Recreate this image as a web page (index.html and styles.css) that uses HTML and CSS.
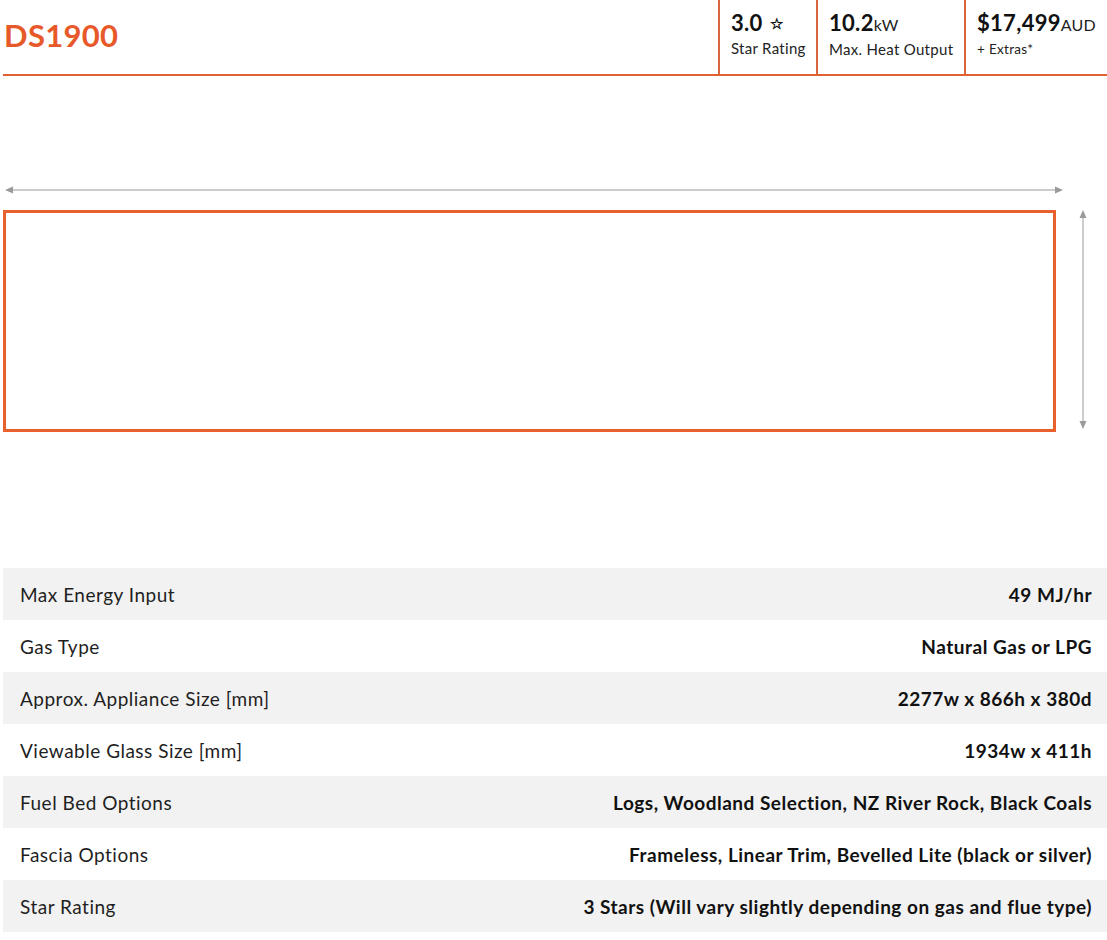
FILE: index.html
```html
<!DOCTYPE html>
<html>
<head>
<meta charset="utf-8">
<link rel="stylesheet" href="styles.css">
</head>
<body>
<div class="page">
  <header class="head">
    <h1 class="title">DS1900</h1>
    <div class="stats">
      <div class="stat s1">
        <div class="big">3.0 <span class="star">☆</span></div>
        <div class="small">Star Rating</div>
      </div>
      <div class="stat s2">
        <div class="big">10.2<span class="unit">kW</span></div>
        <div class="small">Max. Heat Output</div>
      </div>
      <div class="stat s3">
        <div class="big">$17,499<span class="unit">AUD</span></div>
        <div class="small extras">+ Extras*</div>
      </div>
    </div>
  </header>

  <section class="diagram">
    <svg class="harrow" width="1062" height="14" viewBox="0 0 1062 14">
      <line x1="8" y1="7" x2="1054" y2="7" stroke="#9a9a9a" stroke-width="1"/>
      <polygon points="2,7 10,3.5 10,10.5" fill="#9a9a9a"/>
      <polygon points="1060,7 1052,3.5 1052,10.5" fill="#9a9a9a"/>
    </svg>
    <div class="boxrow">
      <div class="glass"></div>
      <svg class="varrow" width="10" height="220" viewBox="0 0 10 220">
        <line x1="5" y1="6" x2="5" y2="214" stroke="#9a9a9a" stroke-width="1"/>
        <polygon points="5,0 1.5,8 8.5,8" fill="#9a9a9a"/>
        <polygon points="5,219 1.5,211 8.5,211" fill="#9a9a9a"/>
      </svg>
    </div>
  </section>

  <section class="specs">
    <div class="row"><span class="k">Max Energy Input</span><span class="v">49 MJ/hr</span></div>
    <div class="row"><span class="k">Gas Type</span><span class="v">Natural Gas or LPG</span></div>
    <div class="row"><span class="k">Approx. Appliance Size [mm]</span><span class="v">2277w x 866h x 380d</span></div>
    <div class="row"><span class="k">Viewable Glass Size [mm]</span><span class="v">1934w x 411h</span></div>
    <div class="row"><span class="k">Fuel Bed Options</span><span class="v">Logs, Woodland Selection, NZ River Rock, Black Coals</span></div>
    <div class="row"><span class="k">Fascia Options</span><span class="v">Frameless, Linear Trim, Bevelled Lite (black or silver)</span></div>
    <div class="row"><span class="k">Star Rating</span><span class="v">3 Stars (Will vary slightly depending on gas and flue type)</span></div>
  </section>
</div>
</body>
</html>
```

FILE: styles.css
```css
html, body {
  margin: 0;
  padding: 0;
  background: #ffffff;
}
body {
  font-family: Lato, "Open Sans", Arial, sans-serif;
  color: #1a1a1a;
}
.page {
  margin-left: 3px;
}
.head {
  display: flex;
  justify-content: space-between;
  align-items: stretch;
  height: 74px;
  border-bottom: 2px solid #e0612f;
}
.title {
  margin: 0 0 5px 0;
  padding-left: 1px;
  font-size: 31px;
  font-weight: 700;
  color: #e8592a;
  align-self: center;
  letter-spacing: 0.3px;
}
.stats {
  display: flex;
}
.stat {
  border-left: 2px solid #d8653d;
  padding: 9px 6px 0 11px;
  box-sizing: border-box;
  white-space: nowrap;
}
.s1 { width: 98px; }
.s2 { width: 148px; }
.s3 { width: 143px; }
.big {
  font-size: 22px;
  font-weight: 700;
  line-height: 27px;
  color: #111;
  letter-spacing: 0.3px;
}
.star {
  font-size: 15px;
  font-weight: 700;
  vertical-align: 2px;
  margin-left: 2px;
}
.unit {
  font-size: 16px;
  font-weight: 400;
  color: #222;
  letter-spacing: 0.2px;
}
.small {
  font-size: 15px;
  line-height: 20px;
  margin-top: 1px;
  color: #222;
  letter-spacing: 0.3px;
}
.small.extras {
  font-size: 13.5px;
  letter-spacing: 0.3px;
}
.diagram {
  margin-top: 107px;
}
.harrow {
  display: block;
}
.boxrow {
  display: flex;
  align-items: flex-start;
  margin-top: 13px;
}
.glass {
  width: 1053px;
  height: 222px;
  box-sizing: border-box;
  border: 3px solid #e8602c;
}
.varrow {
  display: block;
  margin-left: 22px;
}
.specs {
  margin-top: 136px;
}
.row {
  display: flex;
  justify-content: space-between;
  align-items: center;
  height: 52px;
  padding: 0 15px 0 17px;
  font-size: 19px;
  letter-spacing: 0.5px;
}
.row:nth-child(odd) {
  background: #f2f2f2;
}
.k {
  font-weight: 400;
  color: #1f1f1f;
}
.v {
  font-weight: 700;
  color: #111;
}
```
